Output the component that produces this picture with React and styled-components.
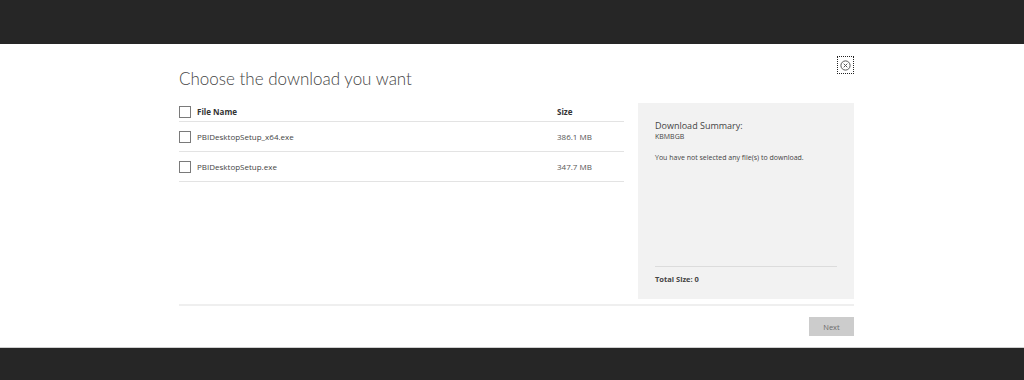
import React from "react";
import styled, { createGlobalStyle } from "styled-components";

const files = [
  { name: "PBIDesktopSetup_x64.exe", size: "386.1 MB" },
  { name: "PBIDesktopSetup.exe", size: "347.7 MB" },
];

const GlobalStyle = createGlobalStyle`
  html, body {
    margin: 0;
    padding: 0;
    background: #ffffff;
    font-family: "Open Sans", "Noto Sans", Arial, sans-serif;
  }
`;

const Page = styled.div`
  width: 1024px;
  height: 380px;
  display: flex;
  flex-direction: column;
  overflow: hidden;
`;

const DarkBar = styled.div`
  height: ${(p) => p.$h}px;
  flex: none;
  background: #262626;
  border-top: ${(p) => (p.$bottom ? "1px solid #cfcfcf" : "none")};
`;

const Main = styled.div`
  flex: 1;
  width: 675px;
  margin-left: 179px;
  display: flex;
  flex-direction: column;
`;

const Header = styled.div`
  display: flex;
  justify-content: space-between;
  align-items: flex-start;
  padding-top: 12px;
`;

const Title = styled.h1`
  margin: 10px 0 0;
  font-family: Lato, "Open Sans", sans-serif;
  font-size: 17px;
  line-height: 25px;
  font-weight: 300;
  color: #454545;
`;

const CloseButton = styled.button`
  width: 17px;
  height: 18px;
  padding: 0;
  margin: 0;
  border: 1px dotted #222;
  background: #fff;
  display: flex;
  align-items: center;
  justify-content: center;
`;

const Body = styled.div`
  display: flex;
  gap: 14px;
  margin-top: 12px;
`;

const Table = styled.div`
  width: 445px;
  display: flex;
  flex-direction: column;
`;

const Row = styled.div`
  display: flex;
  align-items: center;
  height: ${(p) => (p.$head ? 17 : 29)}px;
  padding-bottom: ${(p) => (p.$head ? 1 : 0)}px;
  border-bottom: 1px solid #e3e3e3;
  font-size: 8px;
  color: ${(p) => (p.$head ? "#333" : "#444")};
  font-weight: ${(p) => (p.$head ? 700 : 400)};
`;

const Check = styled.span`
  width: 10px;
  height: 10px;
  border: 1px solid #7a7a7a;
  background: #fff;
  flex: none;
  margin-right: 6px;
`;

const NameCell = styled.span`
  flex: 1;
`;

const SizeCell = styled.span`
  width: 67px;
  color: ${(p) => (p.$head ? "#333" : "#555")};
`;

const Panel = styled.aside`
  width: 216px;
  height: 196px;
  background: #f2f2f2;
  box-sizing: border-box;
  padding: 17px 17px 14px;
  display: flex;
  flex-direction: column;
`;

const PanelTitle = styled.div`
  font-size: 9px;
  line-height: 12px;
  color: #444;
`;

const Small = styled.div`
  font-size: 7px;
  line-height: 9px;
  color: #444;
  margin-top: ${(p) => p.$mt || 0}px;
`;

const Spacer = styled.div`
  flex: 1;
`;

const Total = styled.div`
  border-top: 1px solid #dcdcdc;
  padding-top: 7px;
  font-size: 7.5px;
  line-height: 11px;
  font-weight: 700;
  color: #444;
`;

const Divider = styled.div`
  height: 2px;
  background: #efefef;
  margin-top: 5px;
`;

const Footer = styled.div`
  display: flex;
  justify-content: flex-end;
  margin-top: 11px;
`;

const NextButton = styled.button`
  width: 45px;
  height: 19px;
  border: none;
  background: #cccccc;
  color: #6b6b6b;
  font-family: inherit;
  font-size: 7.5px;
  padding: 0;
`;

export default function App() {
  return (
    <Page>
      <GlobalStyle />
      <DarkBar $h={44} />
      <Main>
        <Header>
          <Title>Choose the download you want</Title>
          <CloseButton aria-label="Close">
            <svg width="11" height="11" viewBox="0 0 11 11">
              <circle cx="5.5" cy="5.5" r="4.6" fill="none" stroke="#555" strokeWidth="1" />
              <path d="M3.7 3.7 L7.3 7.3 M7.3 3.7 L3.7 7.3" stroke="#555" strokeWidth="1" />
            </svg>
          </CloseButton>
        </Header>
        <Body>
          <Table>
            <Row $head>
              <Check />
              <NameCell>File Name</NameCell>
              <SizeCell $head>Size</SizeCell>
            </Row>
            {files.map((f) => (
              <Row key={f.name}>
                <Check />
                <NameCell>{f.name}</NameCell>
                <SizeCell>{f.size}</SizeCell>
              </Row>
            ))}
          </Table>
          <Panel>
            <PanelTitle>Download Summary:</PanelTitle>
            <Small>KBMBGB</Small>
            <Small $mt={12}>You have not selected any file(s) to download.</Small>
            <Spacer />
            <Total>Total Size: 0</Total>
          </Panel>
        </Body>
        <Divider />
        <Footer>
          <NextButton>Next</NextButton>
        </Footer>
      </Main>
      <DarkBar $h={32} $bottom />
    </Page>
  );
}
